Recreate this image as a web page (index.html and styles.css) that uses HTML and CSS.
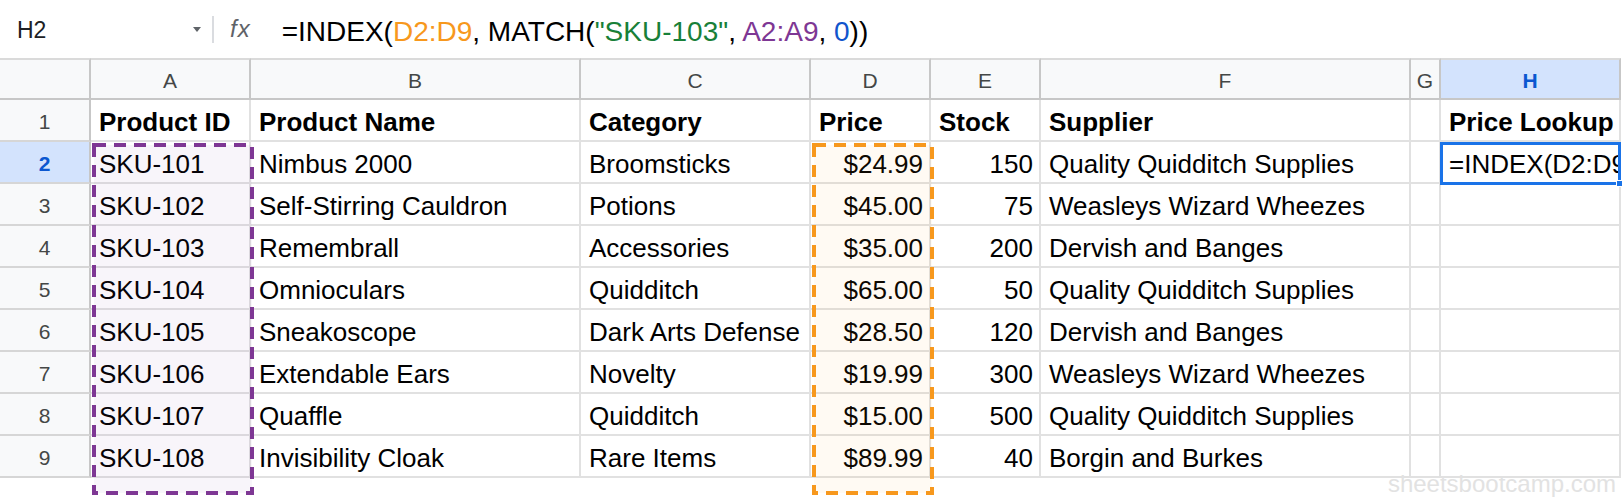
FILE: index.html
```html
<!DOCTYPE html>
<html>
<head>
<meta charset="utf-8">
<link rel="stylesheet" href="styles.css">
</head>
<body>
<div class="formula-bar">
  <div class="namebox"><span class="ref">H2</span><span class="caret"></span></div>
  <div class="sep"></div>
  <div class="fx">fx</div>
  <div class="formula">=INDEX(<span class="f-o">D2:D9</span>, MATCH(<span class="f-g">"SKU-103"</span>, <span class="f-p">A2:A9</span>, <span class="f-b">0</span>))</div>
</div>
<div class="sheet">
  <div class="grid">
    <div class="corner"></div>
    <div class="ch">A</div><div class="ch">B</div><div class="ch">C</div><div class="ch">D</div><div class="ch">E</div><div class="ch">F</div><div class="ch">G</div><div class="ch ch-sel">H</div>

    <div class="rn">1</div>
    <div class="c b">Product ID</div><div class="c b">Product Name</div><div class="c b">Category</div><div class="c b">Price</div><div class="c b">Stock</div><div class="c b">Supplier</div><div class="c"></div><div class="c b">Price Lookup</div>

    <div class="rn rn-sel">2</div>
    <div class="c">SKU-101</div><div class="c">Nimbus 2000</div><div class="c">Broomsticks</div><div class="c num">$24.99</div><div class="c num">150</div><div class="c">Quality Quidditch Supplies</div><div class="c"></div><div class="c">=INDEX(D2:D9, MATCH("SKU-103", A2:A9, 0))</div>

    <div class="rn">3</div>
    <div class="c">SKU-102</div><div class="c">Self-Stirring Cauldron</div><div class="c">Potions</div><div class="c num">$45.00</div><div class="c num">75</div><div class="c">Weasleys Wizard Wheezes</div><div class="c"></div><div class="c"></div>

    <div class="rn">4</div>
    <div class="c">SKU-103</div><div class="c">Remembrall</div><div class="c">Accessories</div><div class="c num">$35.00</div><div class="c num">200</div><div class="c">Dervish and Banges</div><div class="c"></div><div class="c"></div>

    <div class="rn">5</div>
    <div class="c">SKU-104</div><div class="c">Omnioculars</div><div class="c">Quidditch</div><div class="c num">$65.00</div><div class="c num">50</div><div class="c">Quality Quidditch Supplies</div><div class="c"></div><div class="c"></div>

    <div class="rn">6</div>
    <div class="c">SKU-105</div><div class="c">Sneakoscope</div><div class="c">Dark Arts Defense</div><div class="c num">$28.50</div><div class="c num">120</div><div class="c">Dervish and Banges</div><div class="c"></div><div class="c"></div>

    <div class="rn">7</div>
    <div class="c">SKU-106</div><div class="c">Extendable Ears</div><div class="c">Novelty</div><div class="c num">$19.99</div><div class="c num">300</div><div class="c">Weasleys Wizard Wheezes</div><div class="c"></div><div class="c"></div>

    <div class="rn">8</div>
    <div class="c">SKU-107</div><div class="c">Quaffle</div><div class="c">Quidditch</div><div class="c num">$15.00</div><div class="c num">500</div><div class="c">Quality Quidditch Supplies</div><div class="c"></div><div class="c"></div>

    <div class="rn">9</div>
    <div class="c">SKU-108</div><div class="c">Invisibility Cloak</div><div class="c">Rare Items</div><div class="c num">$89.99</div><div class="c num">40</div><div class="c">Borgin and Burkes</div><div class="c"></div><div class="c"></div>
  </div>

  <svg class="range range-a" width="162" height="352" viewBox="0 0 162 352"><rect x="2" y="2" width="158" height="348" fill="rgba(126,55,148,0.05)" stroke="#7e3794" stroke-width="4" stroke-dasharray="12 8"/></svg>
  <svg class="range range-d" width="122" height="352" viewBox="0 0 122 352"><rect x="2" y="2" width="118" height="348" fill="rgba(247,152,29,0.05)" stroke="#f7981d" stroke-width="4" stroke-dasharray="12 8"/></svg>

  <div class="selection"><span class="handle"></span></div>
</div>
<div class="watermark">sheetsbootcamp.com</div>
</body>
</html>
```

FILE: styles.css
```css
* { box-sizing: border-box; }
html, body { margin: 0; padding: 0; background: #fff; }
body {
  width: 1624px;
  height: 502px;
  overflow: hidden;
  position: relative;
  font-family: "Liberation Sans", Arial, sans-serif;
  color: #000;
}

/* formula bar */
.formula-bar {
  height: 58px;
  display: flex;
  align-items: center;
}
.namebox {
  width: 212px;
  display: flex;
  align-items: center;
  justify-content: space-between;
  padding: 0 11px 0 17px;
}
.ref { font-size: 23px; color: #202124; padding-top: 3px; }
.caret {
  width: 0;
  height: 0;
  border-left: 4px solid transparent;
  border-right: 4px solid transparent;
  border-top: 5px solid #5f6368;
}
.sep { width: 2px; height: 27px; background: #dadce0; }
.fx {
  margin-left: 16px;
  font-style: italic;
  font-size: 24px;
  color: #5f6368;
  letter-spacing: 1px;
}
.formula {
  margin-left: 31px;
  font-size: 28px;
  padding-top: 6px;
  white-space: nowrap;
}
.f-o { color: #f7981d; }
.f-g { color: #188038; }
.f-p { color: #7e3794; }
.f-b { color: #1155cc; }

/* sheet */
.sheet { position: relative; }
.grid {
  display: grid;
  grid-template-columns: 91px 160px 330px 230px 120px 110px 370px 30px 180px;
  grid-template-rows: repeat(10, 42px);
}
.corner {
  background: #f8f9fa;
  border-top: 2px solid #dadada;
  border-right: 2px solid #c7c7c7;
  border-bottom: 2px solid #c7c7c7;
}
.ch {
  display: flex;
  align-items: center;
  justify-content: center;
  padding-top: 3px;
  background: #f8f9fa;
  border-top: 2px solid #dadada;
  border-right: 2px solid #c7c7c7;
  border-bottom: 2px solid #c7c7c7;
  font-size: 21px;
  color: #444746;
}
.ch-sel { background: #d3e3fd; color: #0b57d0; font-weight: bold; }
.rn {
  display: flex;
  align-items: center;
  justify-content: center;
  padding-top: 4px;
  background: #f8f9fa;
  border-right: 2px solid #c7c7c7;
  border-bottom: 2px solid #d6d6d6;
  font-size: 21px;
  color: #444746;
}
.rn-sel { background: #d3e3fd; color: #0b57d0; font-weight: bold; }
.c {
  display: flex;
  align-items: center;
  padding: 4px 6px 0 8px;
  border-right: 2px solid #e1e1e1;
  border-bottom: 2px solid #e1e1e1;
  font-size: 26px;
  white-space: nowrap;
  overflow: hidden;
}
.b { font-weight: bold; }
.num { justify-content: flex-end; }

/* overlays */
.range { position: absolute; top: 85px; pointer-events: none; }
.range-a { left: 92px; }
.range-d { left: 812px; }

.selection {
  position: absolute;
  left: 1440px;
  top: 84px;
  width: 181px;
  height: 43px;
  border: 3px solid #1a73e8;
}
.handle {
  position: absolute;
  right: -5px;
  bottom: -5px;
  width: 7px;
  height: 7px;
  background: #1a73e8;
  border: 1px solid #fff;
}

.watermark {
  position: absolute;
  right: 8px;
  top: 472px;
  font-size: 24px;
  line-height: 24px;
  color: #e2e2e2;
}
```
